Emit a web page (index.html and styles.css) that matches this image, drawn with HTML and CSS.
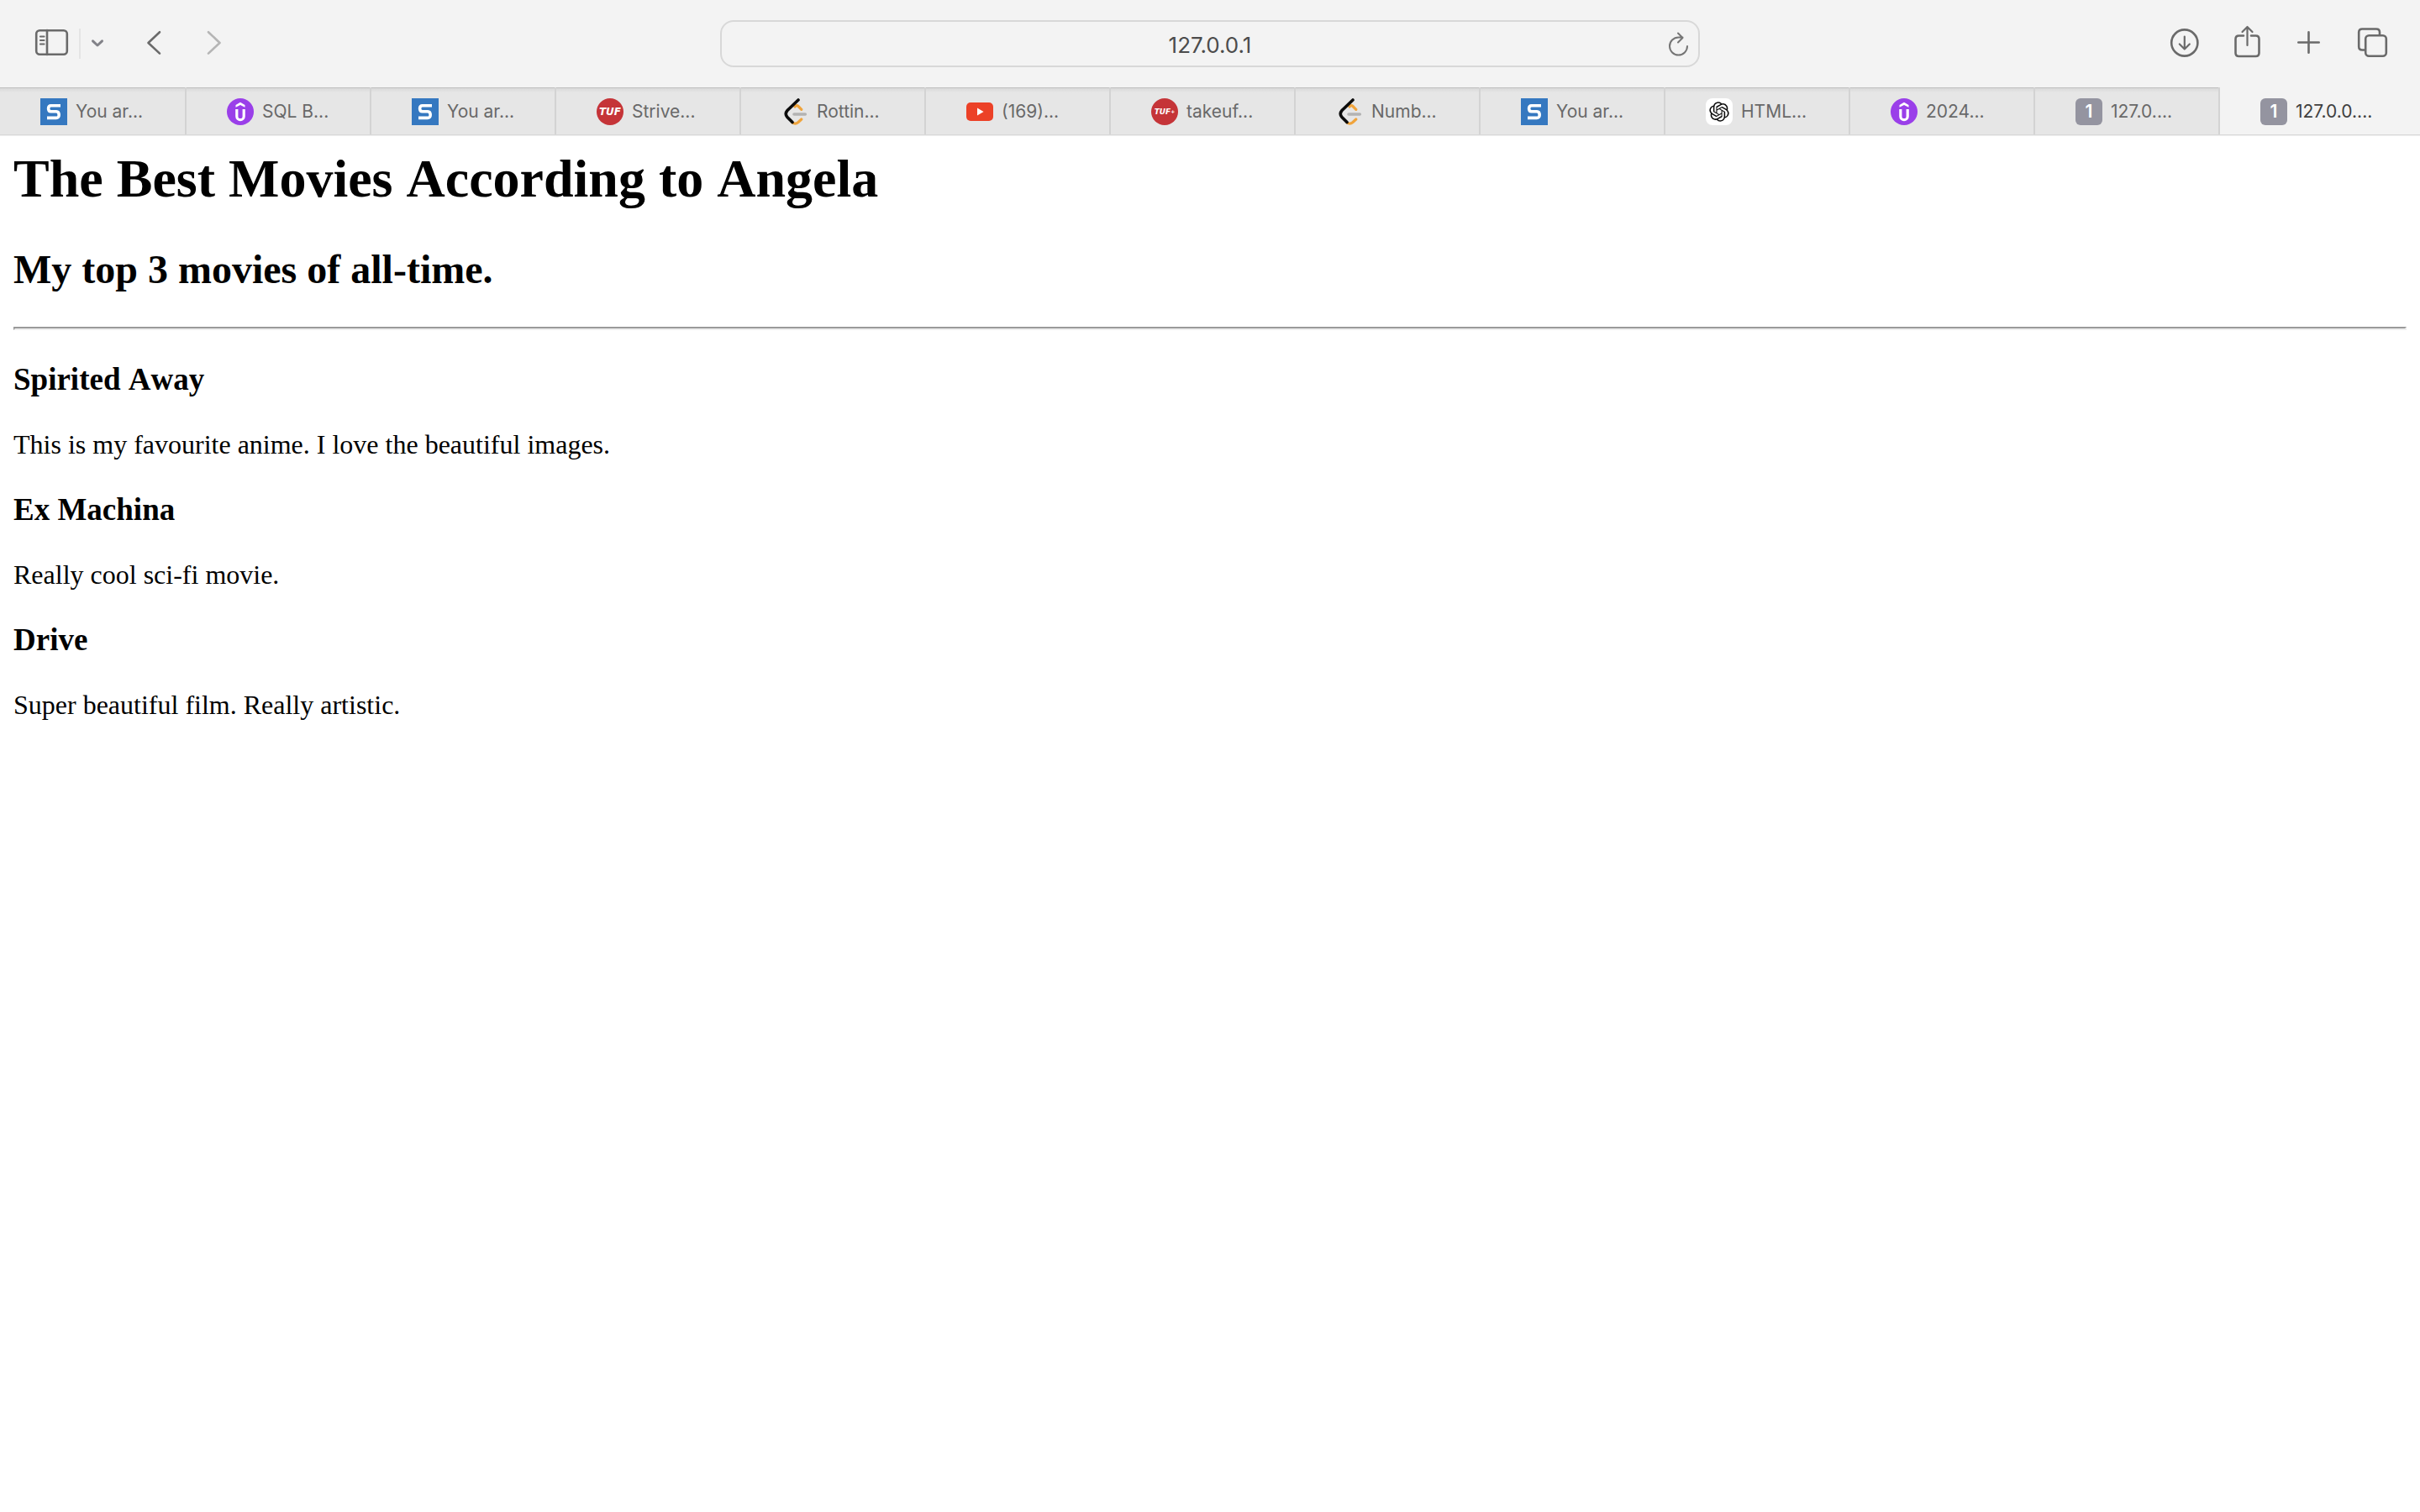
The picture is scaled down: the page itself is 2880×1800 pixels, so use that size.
FILE: index.html
```html
<!DOCTYPE html>
<html lang="en">
<head>
<meta charset="utf-8">
<title>The Best Movies According to Angela</title>
<link rel="stylesheet" href="styles.css">
</head>
<body>
<svg class="sprite" aria-hidden="true">
  <symbol id="fav-s" viewBox="0 0 32 32">
    <rect width="32" height="32" fill="#3578c0"/>
    <path d="M24 8.8H12.6Q9.6 8.8 9.6 12.2T12.6 15.8H19Q22.2 16 22.2 19.8T18.6 23.4H8" fill="none" stroke="#fff" stroke-width="3.6"/>
  </symbol>
  <symbol id="fav-u" viewBox="0 0 32 32">
    <circle cx="16" cy="16" r="16" fill="#9a3fe9"/>
    <path d="M11.8 13V21.500a4.200 4.200 0 0 0 8.400 0V13" fill="none" stroke="#fff" stroke-width="3.200"/>
    <path d="M10.500 10.800V8L16 4.800 21.500 8V10.800L16 8Z" fill="#fff"/>
  </symbol>
  <symbol id="fav-code" viewBox="0 0 32 32">
    <path d="M16 10Q18 7.500 20 9.500L23.800 13.300M13 29Q16.500 31.500 20 28.500L23.800 25" fill="none" stroke="#f0a43c" stroke-width="3.200" stroke-linecap="round"/>
    <path d="M15 19H28.300" stroke="#b3b3b3" stroke-width="3.600" stroke-linecap="round"/>
    <path d="M20 2L7 14.500Q3.500 18.500 7 22.500L13 28.500" fill="none" stroke="#0c0c0c" stroke-width="3.600" stroke-linecap="round"/>
  </symbol>
  <symbol id="fav-video" viewBox="0 0 32 32">
    <rect y="5" width="32" height="22" rx="5" fill="#ec4127"/>
    <path d="M13 11.600L20.600 16L13 20.400Z" fill="#fff"/>
  </symbol>
  <symbol id="fav-knot" viewBox="0 0 32 32">
    <rect width="32" height="32" rx="8" fill="#fff"/>
    <path transform="translate(4.300 4.300) scale(.975)" fill="#0c0c0c" d="M22.2819 9.8211a5.9847 5.9847 0 0 0-.5157-4.9108 6.0462 6.0462 0 0 0-6.5098-2.9A6.0651 6.0651 0 0 0 4.9807 4.1818a5.9847 5.9847 0 0 0-3.9977 2.9 6.0462 6.0462 0 0 0 .7427 7.0966 5.98 5.98 0 0 0 .511 4.9107 6.051 6.051 0 0 0 6.5146 2.9001A5.9847 5.9847 0 0 0 13.2599 24a6.0557 6.0557 0 0 0 5.7718-4.2058 5.9894 5.9894 0 0 0 3.9977-2.9001 6.0557 6.0557 0 0 0-.7475-7.0729zm-9.022 12.6081a4.4755 4.4755 0 0 1-2.8764-1.0408l.1419-.0804 4.7783-2.7582a.7948.7948 0 0 0 .3927-.6813v-6.7369l2.02 1.1686a.071.071 0 0 1 .038.052v5.5826a4.504 4.504 0 0 1-4.4945 4.4944zm-9.6607-4.1254a4.4708 4.4708 0 0 1-.5346-3.0137l.142.0852 4.783 2.7582a.7712.7712 0 0 0 .7806 0l5.8428-3.3685v2.3324a.0804.0804 0 0 1-.0332.0615L9.74 19.9502a4.4992 4.4992 0 0 1-6.1408-1.6464zM2.3408 7.8956a4.485 4.485 0 0 1 2.3655-1.9728V11.6a.7664.7664 0 0 0 .3879.6765l5.8144 3.3543-2.0201 1.1685a.0757.0757 0 0 1-.071 0l-4.8303-2.7865A4.504 4.504 0 0 1 2.3408 7.872zm16.5963 3.8558L13.1038 8.364 15.1192 7.2a.0757.0757 0 0 1 .071 0l4.8303 2.7913a4.4944 4.4944 0 0 1-.6765 8.1042v-5.6772a.79.79 0 0 0-.407-.667zm2.0107-3.0231l-.142-.0852-4.7735-2.7818a.7759.7759 0 0 0-.7854 0L9.409 9.2297V6.8974a.0662.0662 0 0 1 .0284-.0615l4.8303-2.7866a4.4992 4.4992 0 0 1 6.6802 4.66zM8.3065 12.863l-2.02-1.1638a.0804.0804 0 0 1-.038-.0567V6.0742a4.4992 4.4992 0 0 1 7.3757-3.4537l-.142.0805L8.704 5.459a.7948.7948 0 0 0-.3927.6813zm1.0976-2.3654l2.602-1.4998 2.6069 1.4998v2.9994l-2.5974 1.4997-2.6067-1.4997Z"/>
  </symbol>
</svg>

<header class="browser">
  <div class="toolbar">
    <div class="tools">
      <div class="tool-group">
        <button class="tool tool-sidebar" type="button" aria-label="Show sidebar">
          <svg class="icon" viewBox="0 0 44 44"><rect x="3.200" y="6.200" width="36.600" height="28.600" rx="4"/><path d="M16 6V35"/><path class="thin" d="M8 13.500h4.500M8 18h4.500M8 22.500h4.500"/></svg>
        </button>
        <span class="divider"></span>
        <button class="tool tool-menu" type="button" aria-label="Tab groups">
          <svg class="icon icon-chevron" viewBox="0 0 44 44"><path d="M16.500 18.800l5.500 5.200 5.500-5.200"/></svg>
        </button>
      </div>
      <div class="tool-group">
        <button class="tool" type="button" aria-label="Back">
          <svg class="icon" viewBox="0 0 44 44"><path d="M29 8.200L15.500 21 29 33.600"/></svg>
        </button>
        <button class="tool" type="button" aria-label="Forward" disabled>
          <svg class="icon" viewBox="0 0 44 44"><path d="M15 8.200L28.500 21 15 33.600"/></svg>
        </button>
      </div>
    </div>
    <form class="address">
      <input class="address-field" type="text" value="127.0.0.1" aria-label="Address">
      <button class="reload" type="button" aria-label="Reload">
        <svg class="icon" viewBox="0 0 44 44"><path d="M33 25a10.500 10.500 0 1 1-10.500-10.500h5M22 9.500l5.500 5.500-5.500 5.500"/></svg>
      </button>
    </form>
    <div class="tools tools-end">
      <button class="tool" type="button" aria-label="Downloads">
        <svg class="icon" viewBox="0 0 44 44"><circle cx="21.800" cy="21" r="15.600"/><path class="thin" d="M21.800 13.500v15M15.800 22.500l6 6 6-6"/></svg>
      </button>
      <button class="tool" type="button" aria-label="Share">
        <svg class="icon" viewBox="0 0 44 44"><path d="M18 12.500H12.500q-4 0-4 4V33q0 4 4 4H32.500q4 0 4-4V16.500q0-4-4-4H27"/><path class="thin" d="M22.500 24V2.500M16.500 8l6-6 6 6"/></svg>
      </button>
      <button class="tool" type="button" aria-label="New tab">
        <svg class="icon" viewBox="0 0 44 44"><path d="M21.500 8.300v24.400M9.300 20.500h24.400"/></svg>
      </button>
      <button class="tool" type="button" aria-label="Tab overview">
        <svg class="icon" viewBox="0 0 44 44"><rect x="15.200" y="12.200" width="24.600" height="24.600" rx="4"/><path d="M14 29.500H11.200q-4 0-4-4V8.500q0-4 4-4H28q4 0 4 4V11"/></svg>
      </button>
    </div>
  </div>

  <nav class="tabs" aria-label="Open tabs">
    <a class="tab" href="#"><svg class="favicon"><use href="#fav-s"/></svg><span>You ar...</span></a>
    <a class="tab" href="#"><svg class="favicon"><use href="#fav-u"/></svg><span>SQL B...</span></a>
    <a class="tab" href="#"><svg class="favicon"><use href="#fav-s"/></svg><span>You ar...</span></a>
    <a class="tab" href="#"><span class="favicon favicon-tuf">TUF</span><span>Strive...</span></a>
    <a class="tab" href="#"><svg class="favicon"><use href="#fav-code"/></svg><span>Rottin...</span></a>
    <a class="tab" href="#"><svg class="favicon"><use href="#fav-video"/></svg><span>(169)...</span></a>
    <a class="tab" href="#"><span class="favicon favicon-tuf favicon-plus">TUF<sup>+</sup></span><span>takeuf...</span></a>
    <a class="tab" href="#"><svg class="favicon"><use href="#fav-code"/></svg><span>Numb...</span></a>
    <a class="tab" href="#"><svg class="favicon"><use href="#fav-s"/></svg><span>You ar...</span></a>
    <a class="tab" href="#"><svg class="favicon"><use href="#fav-knot"/></svg><span>HTML...</span></a>
    <a class="tab" href="#"><svg class="favicon"><use href="#fav-u"/></svg><span>2024...</span></a>
    <a class="tab" href="#"><span class="favicon favicon-letter">1</span><span>127.0....</span></a>
    <a class="tab tab-active" href="#" aria-current="page"><span class="favicon favicon-letter">1</span><span>127.0.0....</span></a>
  </nav>
</header>

<main class="page">
  <h1>The Best Movies According to Angela</h1>
  <h2>My top 3 movies of all-time.</h2>
  <hr>
  <h3>Spirited Away</h3>
  <p>This is my favourite anime. I love the beautiful images.</p>
  <h3>Ex Machina</h3>
  <p>Really cool sci-fi movie.</p>
  <h3>Drive</h3>
  <p>Super beautiful film. Really artistic.</p>
</main>
</body>
</html>
```
FILE: styles.css
```css
* {
  box-sizing: border-box;
}

body {
  margin: 0;
  background: #fff;
  color: #000;
  font-family: "Liberation Serif", "Times New Roman", serif;
}

.sprite {
  display: none;
}

/* Browser chrome */
.browser {
  font-family: Inter, "Liberation Sans", sans-serif;
  background: #f3f3f3;
  border-bottom: 1px solid #efefef;
}

.toolbar {
  display: grid;
  grid-template-columns: 857fr 1166fr 857fr;
  align-items: center;
  height: 104px;
}

.tools {
  display: flex;
  gap: 11px;
  padding-left: 30px;
}

.tools-end {
  gap: 0;
  justify-content: flex-end;
  padding: 0 21px 0 0;
}

.tool-group {
  display: flex;
  align-items: center;
}

.tool,
.reload {
  display: flex;
  align-items: center;
  justify-content: center;
  width: 74px;
  height: 56px;
  padding: 0;
  border: 0;
  background: none;
  color: #6a6a6a;
}

.tool-group .tool {
  width: 72px;
}

.tool-group .tool-sidebar {
  width: 64px;
}

.tool-group .tool-menu {
  width: 40px;
  color: #828288;
}

.tool:disabled {
  color: #b5b5b5;
}

.divider {
  width: 2px;
  height: 36px;
  background: #e4e4e4;
}

.icon {
  flex: none;
  width: 44px;
  height: 44px;
  fill: none;
  stroke: currentColor;
  stroke-width: 2.6;
  stroke-linecap: round;
  stroke-linejoin: round;
}

.icon .thin {
  stroke-width: 2.2;
}

.icon-chevron {
  stroke-width: 3;
}

.address {
  position: relative;
}

.address-field {
  display: block;
  width: 100%;
  height: 56px;
  padding: 2px 48px 0;
  border: 2px solid #d8d8d8;
  border-radius: 16px;
  background: #f3f3f3;
  color: #4c4c4c;
  font: 26px/32px Inter, "Liberation Sans", sans-serif;
  text-align: center;
}

.reload {
  position: absolute;
  top: 0;
  right: 4px;
  width: 44px;
  color: #757575;
}

.reload .icon {
  stroke-width: 2;
}

.tabs {
  display: grid;
  grid-template-columns: repeat(12, 11fr) 12fr;
  height: 57px;
  border-bottom: 1px solid #d8d8d8;
}

.tab {
  display: flex;
  align-items: center;
  gap: 10px;
  min-width: 0;
  padding: 2px 0 0 48px;
  border-left: 2px solid #d3d3d3;
  background: linear-gradient(#bfc0c0 1px, #d8d8d8 1px, #e6e6e6 6px);
  color: #696969;
  font-size: 21px;
  line-height: 28px;
  white-space: nowrap;
  text-decoration: none;
}

.tab:first-child {
  border-left: 0;
}

.tab-active {
  background: #f3f3f3;
  color: #404040;
}

.favicon {
  flex: none;
  display: flex;
  align-items: center;
  justify-content: center;
  width: 32px;
  height: 32px;
}

.favicon-tuf {
  border-radius: 50%;
  background: #c53438;
  color: #fff;
  font: italic bold 12px/12px "DejaVu Sans", sans-serif;
}

.favicon-plus {
  font-size: 9px;
}

.favicon-plus sup {
  font-size: 6px;
  line-height: 6px;
}

.favicon-letter {
  border-radius: 6px;
  background: #9494a0;
  color: #fff;
  font-weight: 600;
}

/* Document */
.page {
  padding: 14px 16px 32px;
}

.page h1,
.page h2,
.page h3 {
  font-kerning: none;
}

.page h1 {
  margin: 0 0 43px;
  font-size: 64px;
  line-height: 74px;
}

.page h2 {
  margin: 0 0 40px;
  font-size: 48px;
  line-height: 56px;
}

.page hr {
  margin: 0 0 37px;
  border: 2px solid;
  border-color: #9a9a9a #eee #eee #9a9a9a;
}

.page h3 {
  margin: 0 0 37px;
  font-size: 37px;
  line-height: 44px;
}

.page p {
  margin: 0 0 38px;
  font-size: 32px;
  line-height: 36px;
}
```
